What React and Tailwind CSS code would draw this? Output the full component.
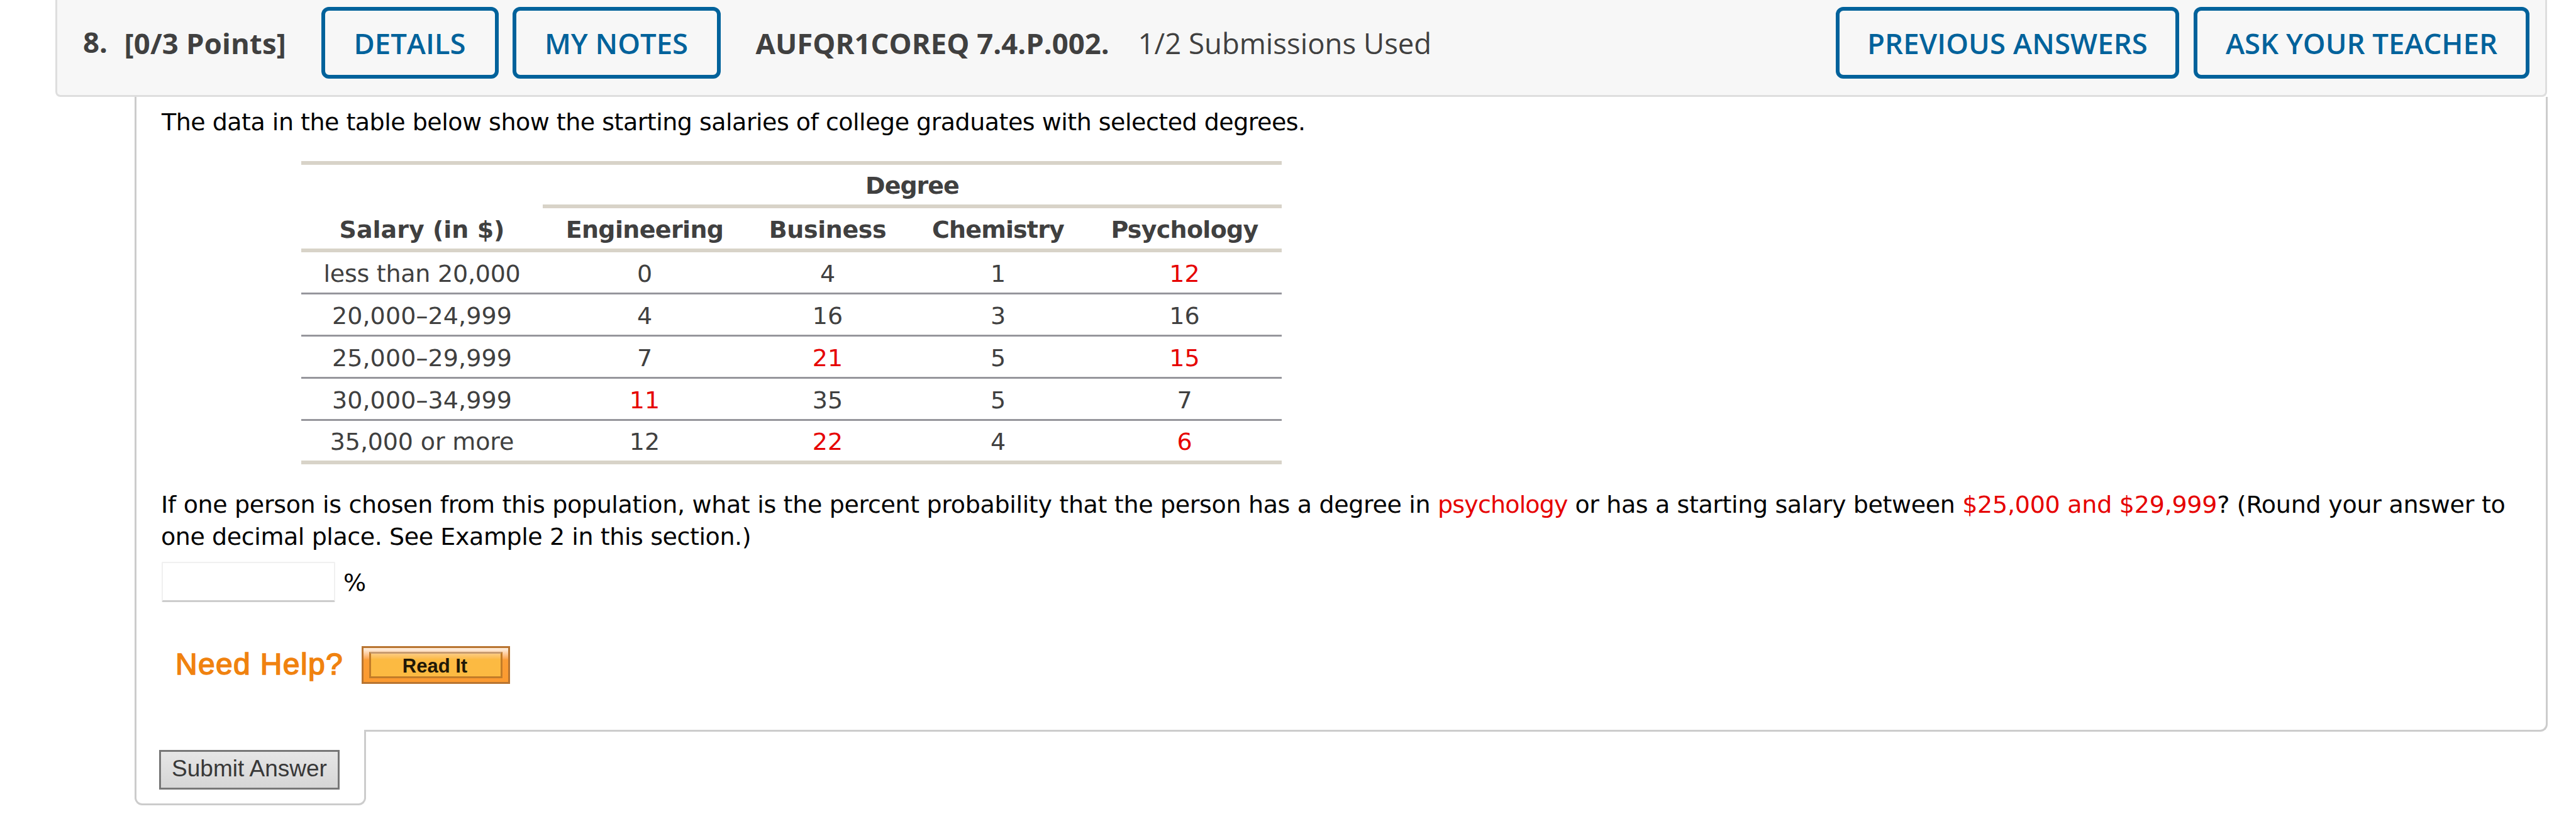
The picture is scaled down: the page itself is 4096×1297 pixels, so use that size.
const ROWS = [
  { label: 'less than 20,000', spacing: 'tracking-[-0.25px]', cells: ['0', '4', '1', '12'], red: [3] },
  { label: '20,000–24,999', spacing: 'tracking-[0.1px]', cells: ['4', '16', '3', '16'], red: [] },
  { label: '25,000–29,999', spacing: 'tracking-[0.1px]', cells: ['7', '21', '5', '15'], red: [1, 3] },
  { label: '30,000–34,999', spacing: 'tracking-[0.1px]', cells: ['11', '35', '5', '7'], red: [0] },
  { label: '35,000 or more', spacing: 'tracking-[-0.15px]', cells: ['12', '22', '4', '6'], red: [1, 3] },
];

const COLS = 'grid grid-cols-[384px_324px_258px_284px_309px] text-center';

function HeaderButton({ className, children }) {
  return (
    <button
      className={`h-[114px] shrink-0 rounded-[12px] border-[6px] border-[#00629b] text-center font-semibold text-[#00629b] ${className}`}
    >
      {children}
    </button>
  );
}

function Header() {
  return (
    <header className="ml-[88px] flex h-[154px] w-[3962px] rounded-b-[8px] border-x-[3px] border-b-[3px] border-[#dedede] bg-[#f7f7f7] pt-[11px] pl-[41px] pr-[25px] font-['Open_Sans',sans-serif] text-[45.5px] leading-[62px] whitespace-nowrap text-[#404040]">
      <div className="flex h-[114px] flex-1 items-center">
        <span className="w-[65.5px] pb-[5px] font-bold">8.</span>
        <span className="w-[313px] font-bold tracking-[0.15px]">[0/3 Points]</span>
        <HeaderButton className="w-[282px]">DETAILS</HeaderButton>
        <HeaderButton className="ml-[22px] w-[331px]">MY NOTES</HeaderButton>
        <span className="ml-[56px] w-[608px] font-bold">AUFQR1COREQ 7.4.P.002.</span>
        <span>1/2 Submissions Used</span>
      </div>
      <div className="flex h-[114px] gap-[23px]">
        <HeaderButton className="w-[546px] tracking-[0.1px]">PREVIOUS ANSWERS</HeaderButton>
        <HeaderButton className="w-[534px]">ASK YOUR TEACHER</HeaderButton>
      </div>
    </header>
  );
}

function SalaryTable() {
  return (
    <div className="mt-[36px] ml-[223px] w-[1559px] border-y-[6px] border-[#d8d3c8] leading-[44px] text-[#404040]">
      <div className={`${COLS} font-bold`}>
        <div />
        <div className="col-span-4 flex h-[69px] items-center justify-center border-b-[6px] border-[#d8d3c8] pt-[3px] tracking-[-1px]">
          Degree
        </div>
      </div>
      <div className={`${COLS} h-[70px] items-center border-b-[6px] border-[#d8d3c8] pt-[3px] font-bold`}>
        <div>Salary (in $)</div>
        <div className="tracking-[-0.65px]">Engineering</div>
        <div className="tracking-[-0.4px]">Business</div>
        <div className="tracking-[-0.84px]">Chemistry</div>
        <div className="tracking-[-0.72px]">Psychology</div>
      </div>
      {ROWS.map((row, i) => (
        <div
          key={row.label}
          className={`${COLS} items-center pt-[3px] ${i < 4 ? 'h-[67px] border-b-[3px] border-[#96969c]' : 'h-[63px]'}`}
        >
          <div className={row.spacing}>{row.label}</div>
          {row.cells.map((v, c) => (
            <div key={c} className={row.red.includes(c) ? 'text-[#e60000]' : ''}>
              {v}
            </div>
          ))}
        </div>
      ))}
    </div>
  );
}

export default function App() {
  return (
    <div className="h-[1297px] w-[4096px] overflow-hidden bg-white">
      <Header />
      <main className="ml-[214px] h-[1009px] w-[3837px] rounded-br-[12px] border-x-[3px] border-b-[3px] border-[#cccccc] pt-[15px] pl-[39px] font-['DejaVu_Sans',Verdana,sans-serif] text-[38px] leading-[51px] whitespace-nowrap text-black">
        <p className="ml-px tracking-[-0.51px]">
          The data in the table below show the starting salaries of college graduates with selected degrees.
        </p>
        <SalaryTable />
        <div className="mt-[39px]">
          <p>
            <span className="tracking-[-0.34px]">
              If one person is chosen from this population, what is the percent probability that the person has a degree in{' '}
            </span>
            <span className="tracking-[-0.84px] text-[#e60000]">psychology</span>
            <span className="tracking-[-0.385px]"> or has a starting salary between </span>
            <span className="tracking-[-0.26px] text-[#e60000]">$25,000 and $29,999</span>
            <span className="tracking-[-0.26px]">? (Round your answer to</span>
          </p>
          <p className="tracking-[-0.42px]">one decimal place. See Example 2 in this section.)</p>
        </div>
        <div className="mt-[14px] flex h-[64px] items-center">
          <input
            aria-label="Percent probability"
            className="ml-px h-[64px] w-[276px] rounded-[2px] border-x-2 border-t-2 border-b-[3px] border-[#f0f0f0] border-b-[#cccccc] bg-white"
          />
          <span className="ml-[13px] pt-[3px]">%</span>
        </div>
        <div className="mt-[70px] flex h-[60px] items-center font-['Liberation_Sans',Arial,sans-serif] font-bold">
          <span className="ml-[23px] w-[296px] pb-[3px] text-[48px] font-normal tracking-[1.35px] text-[#f0820f] [-webkit-text-stroke:1.6px_#f0820f]">
            Need Help?
          </span>
          <button className="h-[60px] w-[236px] border-[3px] border-[#b87430] bg-linear-to-b from-[#fee9d4] from-5% via-[#fb9d35] via-35% to-[#fb9a30] px-[9px] py-[6px]">
            <span className="flex h-[42px] items-center justify-center border-[3px] border-[#c27c28] border-t-[#c79b70] bg-linear-to-b from-[#fccb80] from-0% to-[#fcba42] to-25% pt-[2px] pr-[3px] text-[31px] leading-none text-[#1f1808]">
              Read It
            </span>
          </button>
        </div>
      </main>
      <div className="relative mt-[-3px] ml-[214px] h-[120px] w-[368px] rounded-b-[12px] border-x-[3px] border-b-[3px] border-[#cccccc] bg-white">
        <button className="mt-[32px] ml-[36px] h-[63px] w-[287px] border-[3px] border-[#777777] bg-linear-to-b from-[#e6e6e6] to-[#d6d6d6] pb-[4px] text-center font-['Liberation_Sans',Arial,sans-serif] text-[37px] leading-[42px] whitespace-nowrap text-[#383838]">
          Submit Answer
        </button>
      </div>
    </div>
  );
}
